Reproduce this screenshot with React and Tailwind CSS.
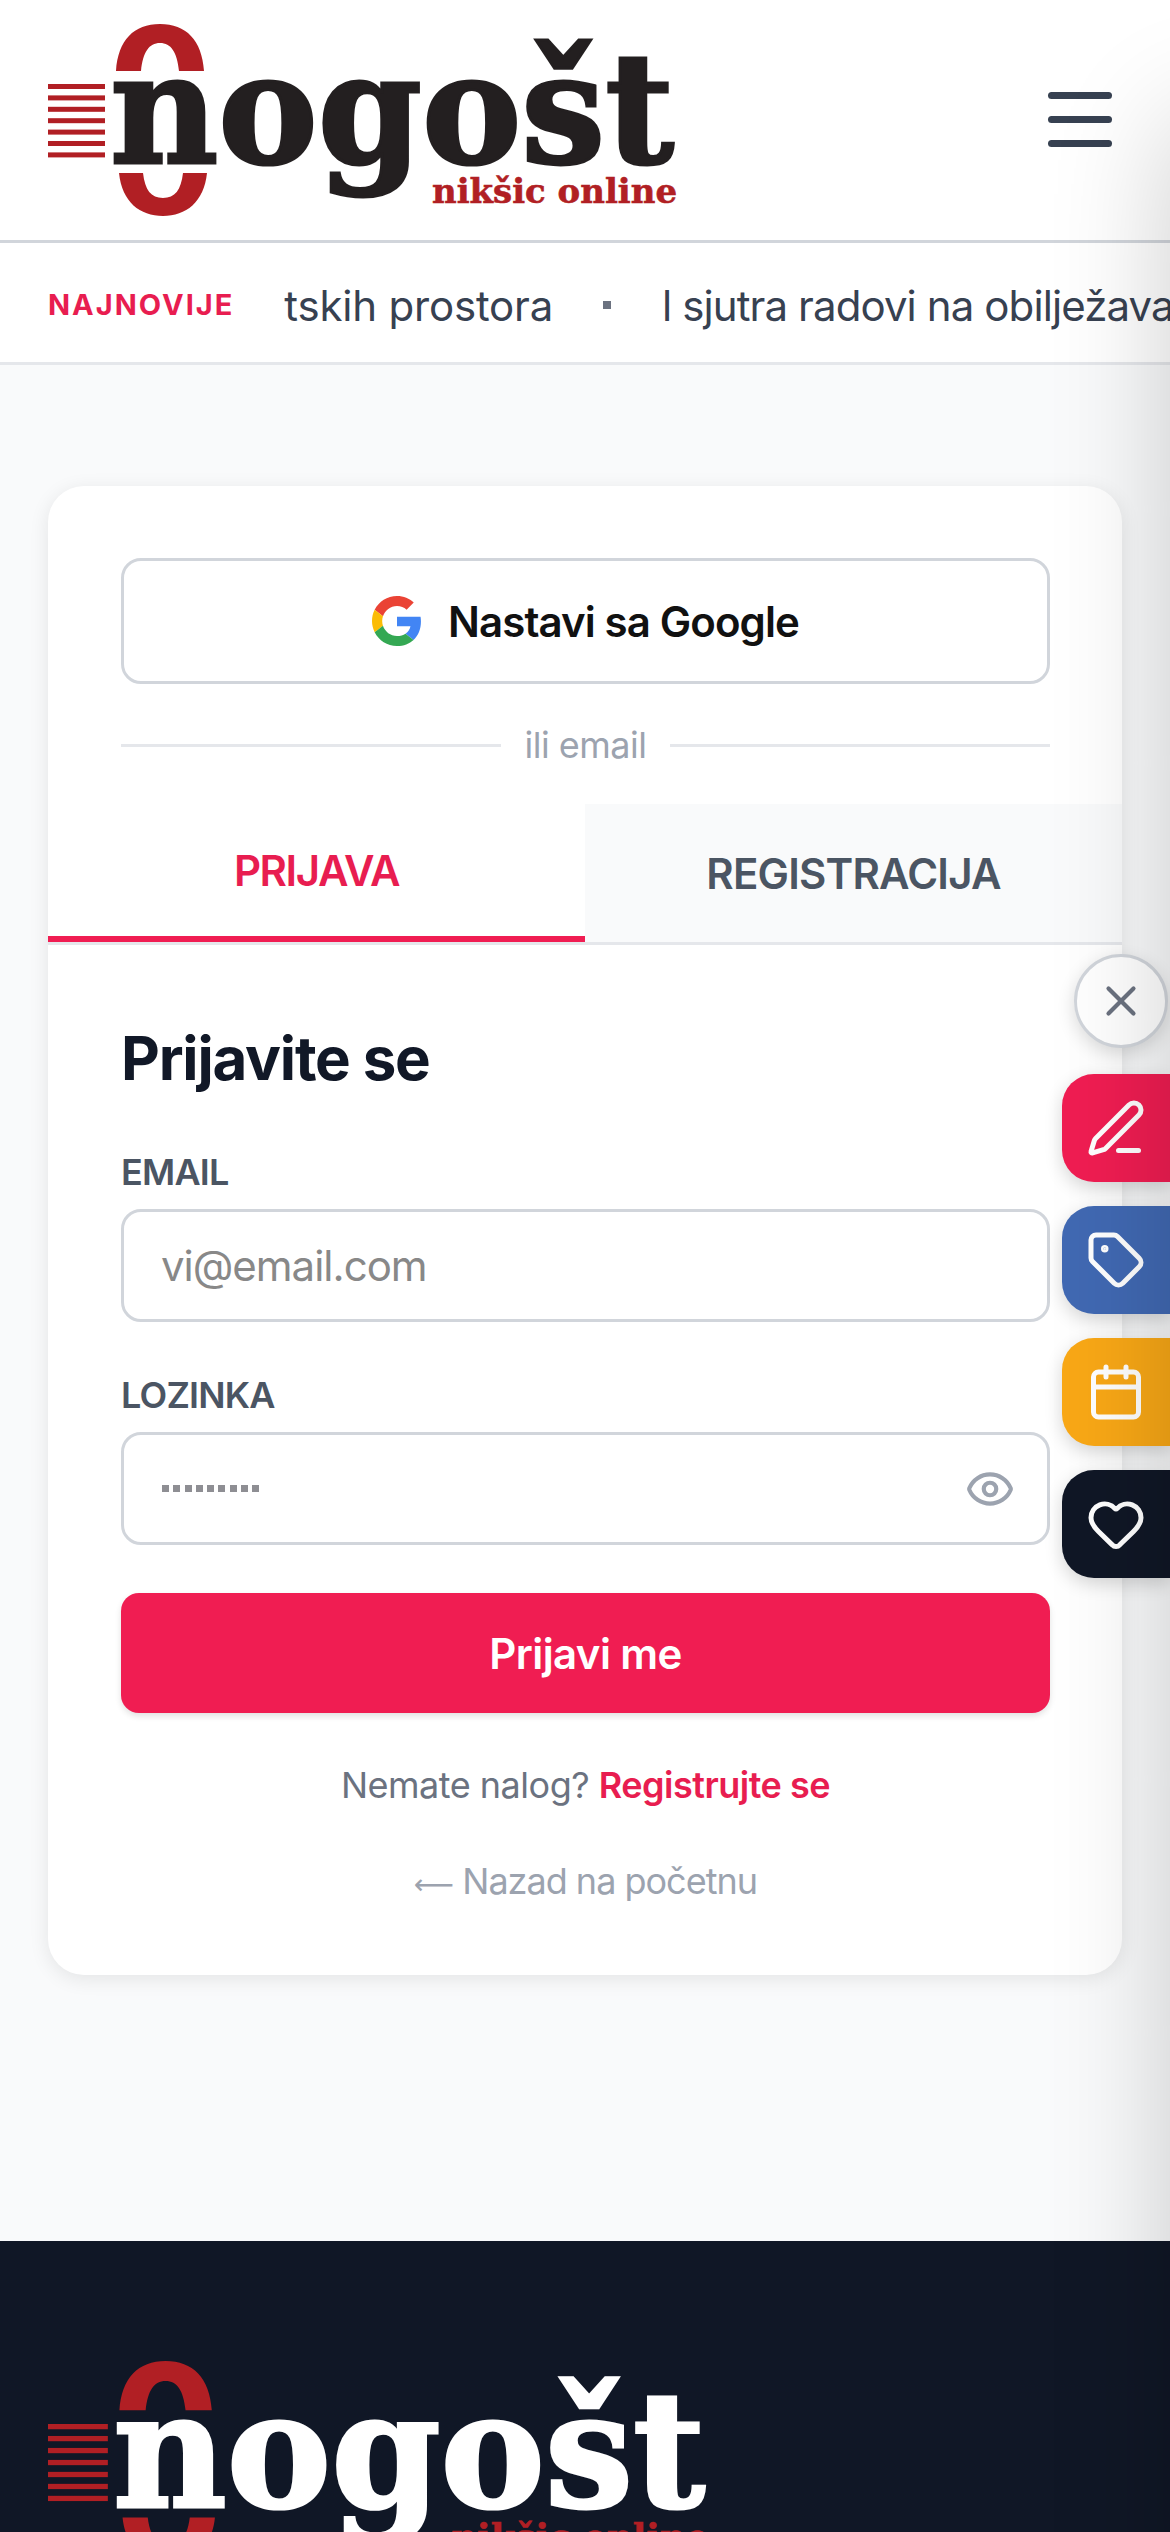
import { Eye, X, PenLine, Tag, Calendar, Heart } from 'lucide-react'

const sans = 'font-["Inter",sans-serif]'

function Logo({ textColor, scale = 1 }) {
  const stripes = [84, 95.4, 106.8, 118.2, 129.6, 141, 152.4]
  return (
    <svg width={630 * scale} height={200 * scale} viewBox="0 0 630 200" className="block overflow-visible">
      {stripes.map(y => (
        <rect key={y} x="0" y={y - 24} width="57" height="5" fill="#b11f24" />
      ))}
      <path d="M68 47C70 16 86 0 112 0C138 0 154 16 156 47H131C129 28 123 19 112 19C101 19 95 28 93 47Z" fill="#b11f24" />
      <path d="M71 149H95C97 166 103 174 115 174C127 174 133 166 135 149H159C156 178 138 192 115 192C92 192 74 178 71 149Z" fill="#b11f24" />
      <text x="62" y="139" fontFamily="DejaVu Serif" fontWeight="700" fontSize="154" textLength="564" lengthAdjust="spacingAndGlyphs" fill={textColor} stroke={textColor} strokeWidth="3">nogošt</text>
      <text x="384" y="179" fontFamily="DejaVu Serif" fontWeight="700" fontSize="33" textLength="245" lengthAdjust="spacingAndGlyphs" fill="#b11f24" stroke="#b11f24" strokeWidth="0.6">nikšic online</text>
    </svg>
  )
}

function GoogleIcon() {
  return (
    <svg width="50" height="50" viewBox="0 0 48 48">
      <path fill="#EA4335" d="M24 9.5c3.54 0 6.71 1.22 9.21 3.6l6.85-6.85C35.9 2.38 30.47 0 24 0 14.62 0 6.51 5.38 2.56 13.22l7.98 6.19C12.43 13.72 17.74 9.5 24 9.5z" />
      <path fill="#4285F4" d="M46.98 24.55c0-1.57-.15-3.09-.38-4.55H24v9.02h12.94c-.58 2.96-2.26 5.48-4.78 7.18l7.73 6c4.51-4.18 7.09-10.36 7.09-17.65z" />
      <path fill="#FBBC05" d="M10.53 28.59c-.48-1.45-.76-2.99-.76-4.59s.27-3.14.76-4.59l-7.98-6.19C.92 16.46 0 20.12 0 24c0 3.88.92 7.54 2.56 10.78l7.97-6.19z" />
      <path fill="#34A853" d="M24 48c6.48 0 11.93-2.13 15.89-5.81l-7.73-6c-2.15 1.45-4.92 2.3-8.16 2.3-6.26 0-11.57-4.22-13.47-9.91l-7.98 6.19C6.51 42.62 14.62 48 24 48z" />
    </svg>
  )
}

function SideButton({ className, children }) {
  return (
    <button className={`w-[108px] h-[108px] rounded-l-[32px] flex items-center pl-[24px] text-white shadow-[0_6px_18px_rgba(0,0,0,0.16)] ${className}`}>
      {children}
    </button>
  )
}

export default function App() {
  return (
    <div className={`relative w-[1170px] h-[2532px] overflow-hidden bg-[#f9fafb] ${sans}`}>
      {/* Cabecera */}
      <header className="h-[243px] bg-white border-b-[3px] border-[#d1d5db] pt-[24px] px-[48px] flex justify-between">
        <Logo textColor="#231f20" />
        <div className="mt-[68px] mr-[10px] flex flex-col gap-[17px]">
          <span className="block w-[64px] h-[7px] rounded-full bg-[#374151]" />
          <span className="block w-[64px] h-[7px] rounded-full bg-[#374151]" />
          <span className="block w-[64px] h-[7px] rounded-full bg-[#374151]" />
        </div>
      </header>

      {/* Najnovije */}
      <div className="h-[122px] bg-white border-b-[3px] border-[#e5e7eb] pl-[48px] pt-[5px] flex items-center overflow-hidden whitespace-nowrap">
        <span className="text-[29px] font-bold tracking-[2px] text-[#e81d50]">NAJNOVIJE</span>
        <span className="ml-[50px] text-[42px] text-[#374151] tracking-[-0.2px]">tskih prostora</span>
        <span className="ml-[50px] w-[8px] h-[8px] bg-[#6b7280] shrink-0" />
        <span className="ml-[51px] text-[42px] text-[#374151] tracking-[-0.9px]">l sjutra radovi na obilježavanju</span>
      </div>

      {/* Forma */}
      <main className="px-[48px] pt-[121px] pb-[266px]">
        <div className="h-[1489px] bg-white rounded-[36px] shadow-[0_4px_20px_rgba(0,0,0,0.09)] overflow-hidden">
          <div className="pl-[73px] pr-[72px] pt-[72px]">
            <button className="w-full h-[126px] bg-white border-[3px] border-[#d1d5db] rounded-[20px] flex items-center justify-center gap-[26px]">
              <GoogleIcon />
              <span className="text-[42px] font-semibold text-[#111111] tracking-[-0.9px]">Nastavi sa Google</span>
            </button>
            <div className="mt-[38px] h-[46px] flex items-center gap-[24px]">
              <span className="flex-1 h-[3px] bg-[#e5e7eb]" />
              <span className="text-[36px] text-[#9ca3af] tracking-[-0.5px]">ili email</span>
              <span className="flex-1 h-[3px] bg-[#e5e7eb]" />
            </div>
          </div>

          <div className="mt-[36px] h-[141px] grid grid-cols-2 border-b-[3px] border-[#e5e7eb] text-[42px] font-semibold">
            <div className="border-b-[6px] border-[#f01d52] text-[#e81d50] flex items-center justify-center tracking-[-1.4px]">PRIJAVA</div>
            <div className="bg-[#f9fafb] text-[#4b5563] flex items-center justify-center tracking-[-0.8px]">REGISTRACIJA</div>
          </div>

          <div className="pl-[73px] pr-[72px] pt-[77px]">
            <h1 className="text-[60px] leading-[72px] font-bold text-[#111827] tracking-[-1.2px]">Prijavite se</h1>

            <label className="block mt-[56px] text-[36px] leading-[44px] font-semibold text-[#4b5563] tracking-[-0.8px]">EMAIL</label>
            <div className="mt-[15px] h-[113px] border-[3px] border-[#d1d5db] rounded-[20px] pl-[37px] flex items-center">
              <span className="text-[42px] text-[#888888] tracking-[-1px]">vi@email.com</span>
            </div>

            <label className="block mt-[51px] text-[36px] leading-[44px] font-semibold text-[#4b5563] tracking-[-0.8px]">LOZINKA</label>
            <div className="mt-[15px] h-[113px] border-[3px] border-[#d1d5db] rounded-[20px] pl-[38px] pr-[32px] flex items-center justify-between">
              <div className="flex gap-[4.25px]">
                {[...Array(9)].map((_, i) => (
                  <span key={i} className="block w-[7px] h-[7px] bg-[#8e8e93]" />
                ))}
              </div>
              <Eye size={50} strokeWidth={2} className="text-[#9ca3af]" />
            </div>

            <button className="mt-[48px] w-full h-[120px] rounded-[18px] bg-[#f01d52] text-white text-[42px] font-semibold tracking-[-0.6px] shadow-[0_3px_6px_rgba(0,0,0,0.12)]">
              Prijavi me
            </button>

            <p className="mt-[50px] text-center text-[36px] leading-[44px] text-[#6b7280] tracking-[-0.5px]">
              Nemate nalog? <span className="font-semibold text-[#e81d50]">Registrujte se</span>
            </p>
            <p className="mt-[52px] text-center text-[36px] leading-[44px] text-[#9ca3af] tracking-[-1px]">
              <span className='text-[28px] font-["DejaVu_Sans",sans-serif]'>⟵</span> Nazad na početnu
            </p>
          </div>
        </div>
      </main>

      {/* Footer */}
      <footer className="h-[500px] bg-[#101726] pt-[120px] px-[48px]">
        <Logo textColor="#ffffff" scale={1.05} />
      </footer>

      {/* Botones laterales */}
      <div className="absolute top-[954px] right-0 flex flex-col items-end">
        <button className="mr-[2px] w-[94px] h-[94px] rounded-full bg-white border-[3px] border-[#d1d5db] flex items-center justify-center text-[#6b7280] shadow-[0_6px_18px_rgba(0,0,0,0.14)]">
          <X size={50} strokeWidth={2} />
        </button>
        <div className="mt-[26px] flex flex-col gap-[24px]">
          <SideButton className="bg-[#f01d52]"><PenLine size={60} strokeWidth={2} /></SideButton>
          <SideButton className="bg-[#4169b3]"><Tag size={60} strokeWidth={2} /></SideButton>
          <SideButton className="bg-[#f9a816]"><Calendar size={60} strokeWidth={2} /></SideButton>
          <SideButton className="bg-[#101726]"><Heart size={60} strokeWidth={2} /></SideButton>
        </div>
      </div>

      {/* Sombra del menu lateral, fuera de pantalla */}
      <div className="absolute left-full top-[120px] bottom-[-200px] w-[300px] shadow-[0_0_120px_rgba(0,0,0,0.2)] pointer-events-none" />
    </div>
  )
}
